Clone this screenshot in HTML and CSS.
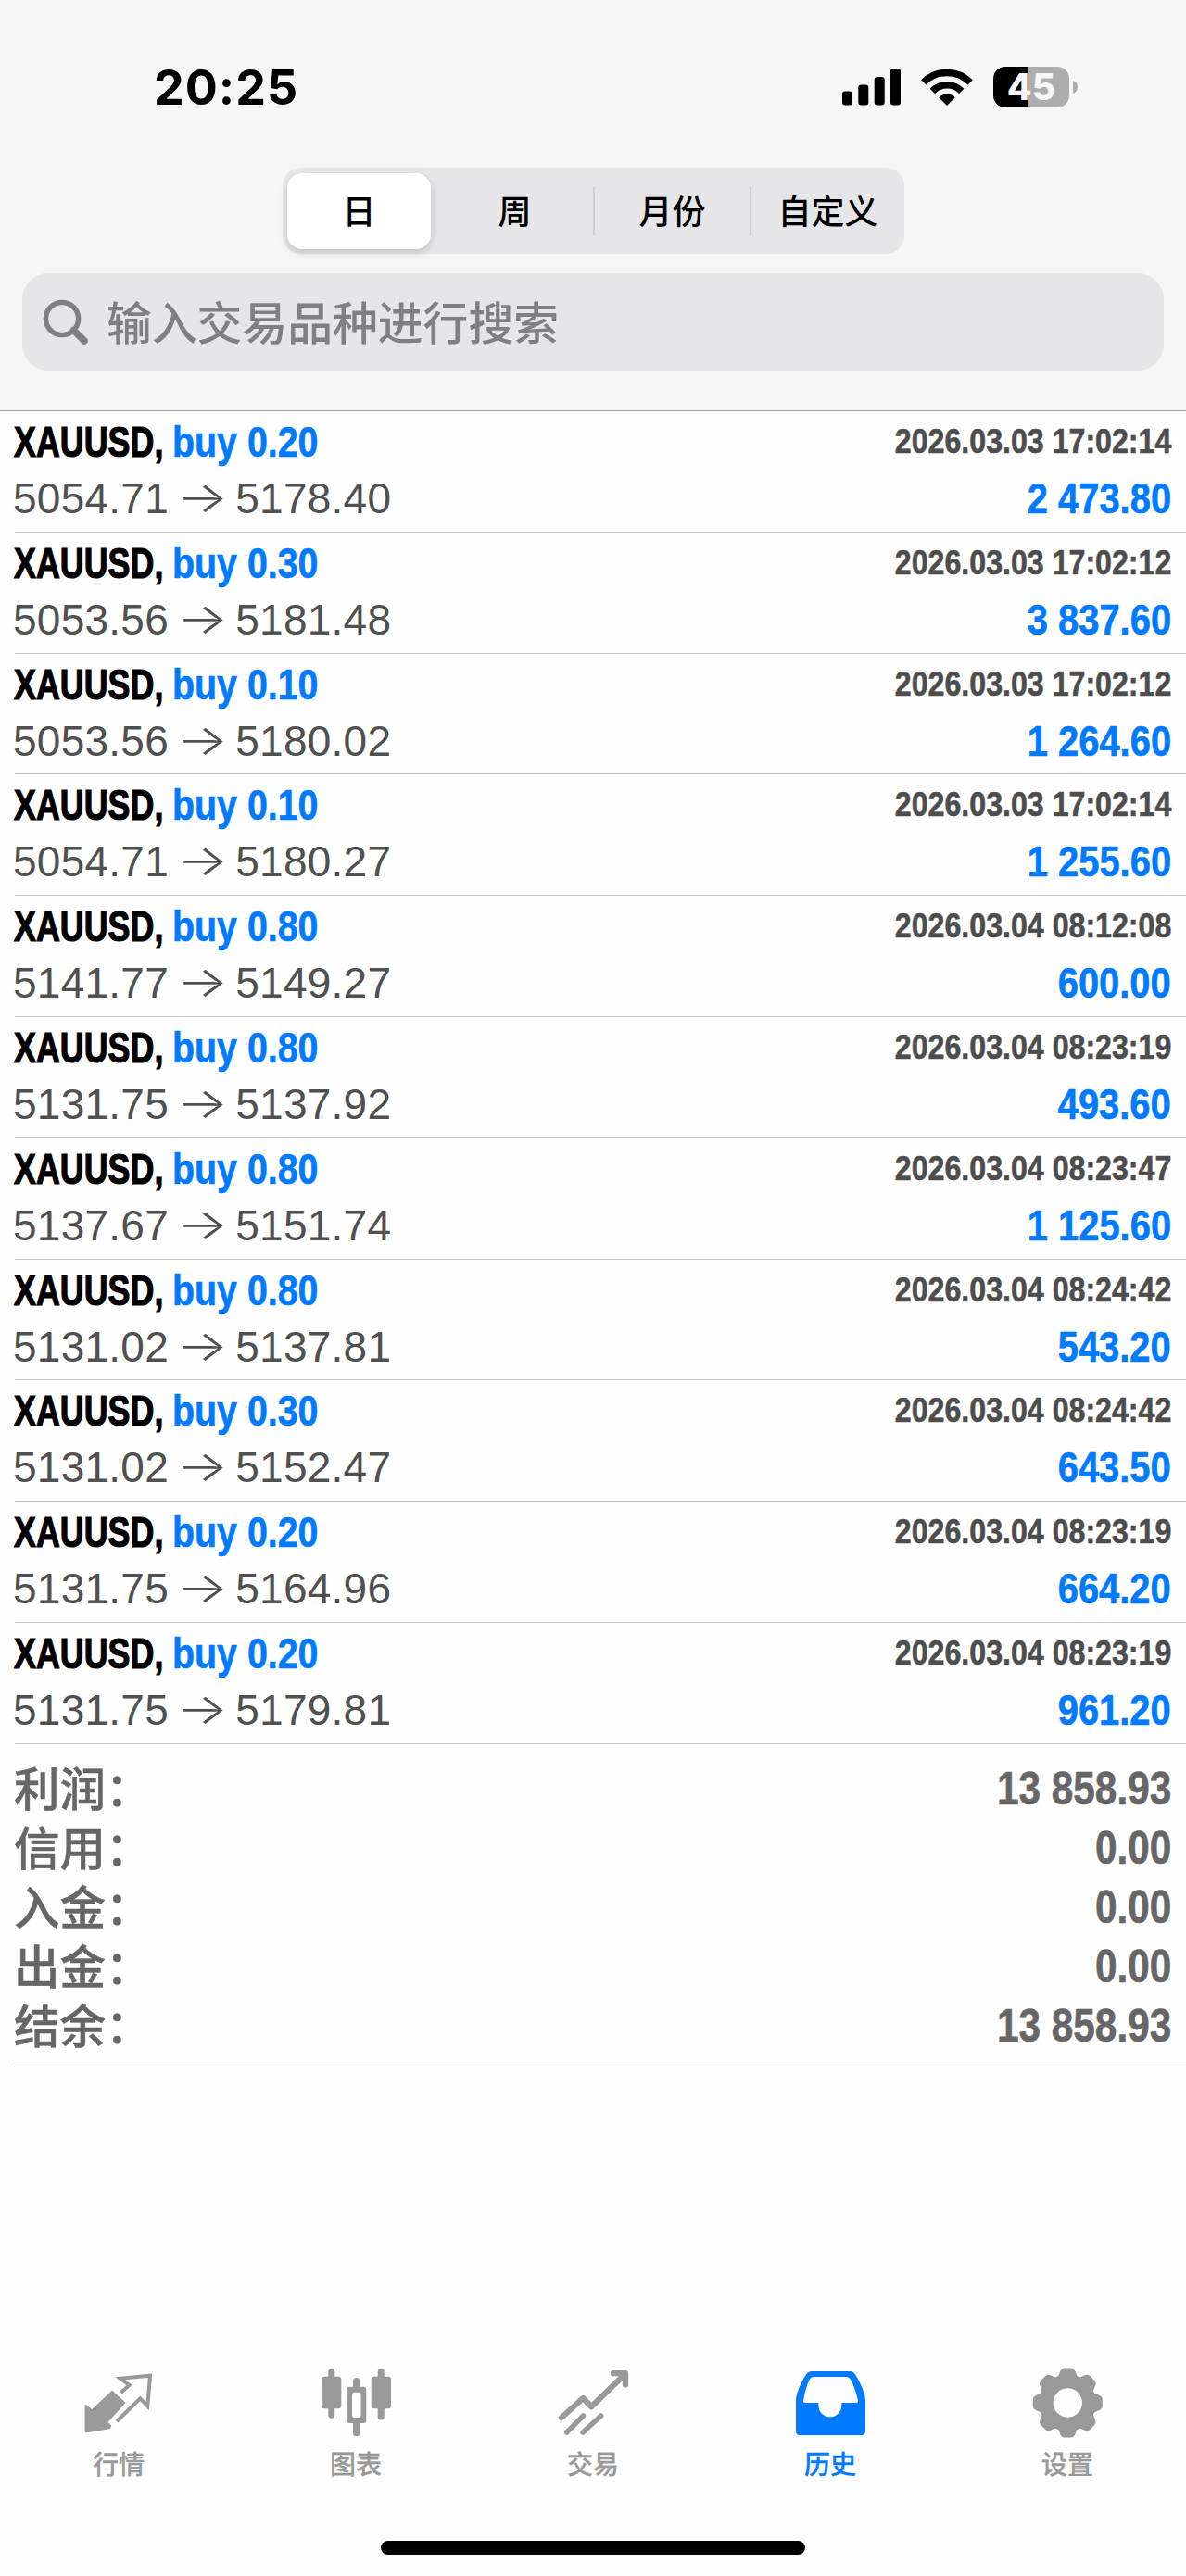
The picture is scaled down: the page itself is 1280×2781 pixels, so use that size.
FILE: index.html
```html
<!DOCTYPE html>
<html lang="zh-CN">
<head>
<meta charset="utf-8">
<title>历史</title>
<link rel="stylesheet" href="styles.css">
</head>
<body>
<div class="app">
  <header class="header">
    <div class="status">
      <span class="clock">20:25</span>
      <div class="indicators">
        <svg class="signal" width="64" height="40" viewBox="0 0 64 40"><rect x="0" y="24.5" width="11" height="15" rx="3"/><rect x="17.3" y="17.5" width="11" height="22" rx="3"/><rect x="34.7" y="9" width="11" height="30.5" rx="3"/><rect x="52" y="0" width="11" height="39.5" rx="3"/></svg>
        <svg class="wifi" width="58" height="42" viewBox="0 0 58 42"><path class="arc" d="M3.8 15.8A35.7 35.7 0 0 1 54.2 15.8"/><path class="arc" d="M13.3 25.3A22.2 22.2 0 0 1 44.7 25.3"/><path d="M29 41L20.2 32.2A12.5 12.5 0 0 1 37.8 32.2Z"/></svg>
        <div class="battery"><span>45</span></div>
        <svg class="nub" width="5" height="14" viewBox="0 0 5 14"><path d="M0 0Q5 2 5 7Q5 12 0 14Z"/></svg>
      </div>
    </div>
    <nav class="segments">
      <span class="segment selected">日</span>
      <span class="segment week">周</span>
      <span class="segment ruled">月份</span>
      <span class="segment ruled">自定义</span>
    </nav>
    <div class="search">
      <svg width="52" height="52" viewBox="0 0 52 52"><circle cx="22" cy="22" r="17.6"/><path d="M34.5 34.5L46 46" class="handle"/></svg>
      <span>输入交易品种进行搜索</span>
    </div>
  </header>

  <main>
    <ul class="deals">
      <li><div class="line"><span class="title"><b>XAUUSD,</b><i>buy 0.20</i></span><time>2026.03.03 17:02:14</time></div><div class="line"><span class="price">5054.71 <em>→</em> 5178.40</span><span class="profit">2 473.80</span></div></li>
      <li><div class="line"><span class="title"><b>XAUUSD,</b><i>buy 0.30</i></span><time>2026.03.03 17:02:12</time></div><div class="line"><span class="price">5053.56 <em>→</em> 5181.48</span><span class="profit">3 837.60</span></div></li>
      <li><div class="line"><span class="title"><b>XAUUSD,</b><i>buy 0.10</i></span><time>2026.03.03 17:02:12</time></div><div class="line"><span class="price">5053.56 <em>→</em> 5180.02</span><span class="profit">1 264.60</span></div></li>
      <li><div class="line"><span class="title"><b>XAUUSD,</b><i>buy 0.10</i></span><time>2026.03.03 17:02:14</time></div><div class="line"><span class="price">5054.71 <em>→</em> 5180.27</span><span class="profit">1 255.60</span></div></li>
      <li><div class="line"><span class="title"><b>XAUUSD,</b><i>buy 0.80</i></span><time>2026.03.04 08:12:08</time></div><div class="line"><span class="price">5141.77 <em>→</em> 5149.27</span><span class="profit">600.00</span></div></li>
      <li><div class="line"><span class="title"><b>XAUUSD,</b><i>buy 0.80</i></span><time>2026.03.04 08:23:19</time></div><div class="line"><span class="price">5131.75 <em>→</em> 5137.92</span><span class="profit">493.60</span></div></li>
      <li><div class="line"><span class="title"><b>XAUUSD,</b><i>buy 0.80</i></span><time>2026.03.04 08:23:47</time></div><div class="line"><span class="price">5137.67 <em>→</em> 5151.74</span><span class="profit">1 125.60</span></div></li>
      <li><div class="line"><span class="title"><b>XAUUSD,</b><i>buy 0.80</i></span><time>2026.03.04 08:24:42</time></div><div class="line"><span class="price">5131.02 <em>→</em> 5137.81</span><span class="profit">543.20</span></div></li>
      <li><div class="line"><span class="title"><b>XAUUSD,</b><i>buy 0.30</i></span><time>2026.03.04 08:24:42</time></div><div class="line"><span class="price">5131.02 <em>→</em> 5152.47</span><span class="profit">643.50</span></div></li>
      <li><div class="line"><span class="title"><b>XAUUSD,</b><i>buy 0.20</i></span><time>2026.03.04 08:23:19</time></div><div class="line"><span class="price">5131.75 <em>→</em> 5164.96</span><span class="profit">664.20</span></div></li>
      <li><div class="line"><span class="title"><b>XAUUSD,</b><i>buy 0.20</i></span><time>2026.03.04 08:23:19</time></div><div class="line"><span class="price">5131.75 <em>→</em> 5179.81</span><span class="profit">961.20</span></div></li>
    </ul>
    <dl class="summary">
      <div><dt>利润：</dt><dd>13 858.93</dd></div>
      <div><dt>信用：</dt><dd>0.00</dd></div>
      <div><dt>入金：</dt><dd>0.00</dd></div>
      <div><dt>出金：</dt><dd>0.00</dd></div>
      <div><dt>结余：</dt><dd>13 858.93</dd></div>
    </dl>
  </main>

  <footer class="footer">
    <nav class="tabs">
      <a class="tab">
        <svg viewBox="0 0 80 80"><path d="M33 28.500L46.500 41L27.500 62L31.500 66L30 68.500L5.500 72.500Q4.300 72.500 4.300 71V43.500L11.300 49Z" class="round"/><path class="line1" d="M42.500 30L51.500 22L41.700 14.700L74 11.700L71.300 44.700L63.300 36.300L38 61"/></svg>
        <span>行情</span>
      </a>
      <a class="tab">
        <svg viewBox="0 0 80 80"><rect x="10.300" y="4" width="7" height="53.700" rx="3.500"/><rect x="3" y="12.700" width="21.300" height="34.600" rx="3"/><rect x="37" y="14" width="7.300" height="63.300" rx="3.600"/><rect x="30.300" y="23.700" width="21" height="39.300" rx="3"/><rect class="hole" x="36" y="29.700" width="9.500" height="27.300" rx="3"/><rect x="63.700" y="4" width="7" height="55.500" rx="3.500"/><rect x="56.700" y="12.700" width="21.300" height="34.600" rx="3"/></svg>
        <span>图表</span>
      </a>
      <a class="tab">
        <svg viewBox="0 0 80 80"><path class="line2" d="M6 57L29.300 36L38.300 45.300L74.300 10.300M62 9.200H75V21.500"/><path class="line3" d="M11.700 73L29.500 55M29 73L48.700 55"/></svg>
        <span>交易</span>
      </a>
      <a class="tab active">
        <svg viewBox="0 0 80 80"><path fill-rule="evenodd" d="M20.500 7H61.500Q65 7 67 10.500C73 20 78 31 78 39V71.500Q78 76 73.500 76H7.500Q3 76 3 71.500V39C3 31 8 20 14 10.500Q16 7 20.500 7ZM22 13Q19 13 17.800 15.500Q13 26 11 38.500Q10.700 41 13 41H27.300V43.800A12.500 12.500 0 0 0 52.300 43.800V41H68Q70.300 41 70 38.500Q67 25 61.800 15.500Q60.500 13 57.500 13Z"/></svg>
        <span>历史</span>
      </a>
      <a class="tab">
        <svg viewBox="0 0 80 80"><g transform="translate(40.300 41)"><circle r="30.500"/><g id="pair"><path id="tooth" d="M-12 -27Q-9.500 -29 -8.500 -33Q-7 -37.500 -3.500 -37.500H3.500Q7 -37.500 8.500 -33Q9.500 -29 12 -27Z"/><use href="#tooth" transform="rotate(45)"/></g><use href="#pair" transform="rotate(90)"/><use href="#pair" transform="rotate(180)"/><use href="#pair" transform="rotate(270)"/><circle class="hole" r="15.700"/></g></svg>
        <span>设置</span>
      </a>
    </nav>
    <div class="home"></div>
  </footer>
</div>
</body>
</html>
```
FILE: styles.css
```css
* { box-sizing: border-box; margin: 0; padding: 0; }
body { background: #fefefe; }
.app {
  width: 1280px;
  height: 2781px;
  display: flex;
  flex-direction: column;
  font-family: "Liberation Sans", "Noto Sans CJK SC", sans-serif;
  overflow: hidden;
}

.header {
  height: 444px;
  flex: none;
  background: #f6f6f6;
  border-bottom: 1px solid #9c9c9c;
  display: flex;
  flex-direction: column;
}
.status {
  height: 181px;
  padding: 65px 117px 0 166px;
  display: flex;
  align-items: flex-start;
  justify-content: space-between;
}
.clock {
  font: 700 52px/60px Inter, sans-serif;
  letter-spacing: 1px;
}
.indicators { display: flex; align-items: center; height: 57px; }
.wifi { margin-left: 20px; }
.arc { fill: none; stroke: #000; stroke-width: 7.5; }
.battery {
  width: 82px;
  height: 44px;
  margin-left: 21px;
  border-radius: 13px;
  background: linear-gradient(90deg, #000 37px, #adadad 37px);
  color: #f6f6f6;
  font: 800 39px/44px Inter, sans-serif;
  text-align: center;
}
.nub { margin-left: 4px; fill: #adadad; }

.segments {
  width: 671px;
  height: 93px;
  margin-left: 305px;
  padding: 6px 0 5px 5px;
  border-radius: 20px;
  background: #e6e6e8;
  display: grid;
  grid-template-columns: 155px 175px 169px 167px;
}
.segment {
  display: flex;
  align-items: center;
  justify-content: center;
  padding-bottom: 4px;
  font: 500 36px/50px "Noto Sans CJK SC", sans-serif;
}
.segment.week { padding-left: 6px; }
.segment.ruled {
  padding-left: 2px;
  background: linear-gradient(#cfcfd2, #cfcfd2) 0 center / 2px 52px no-repeat;
}
.selected {
  background: #fff;
  border-radius: 16px;
  box-shadow: 0 4px 10px rgba(0, 0, 0, .14);
}
.search {
  height: 105px;
  margin: 21px 24px 0;
  padding-left: 21px;
  border-radius: 28px;
  background: #e6e6e8;
  display: flex;
  align-items: center;
  color: #808084;
  font: 500 48.800px/72px "Noto Sans CJK SC", sans-serif;
}
.search svg { fill: none; stroke: #808084; stroke-width: 5.500; }
.search .handle { stroke-width: 7.500; stroke-linecap: round; }
.search span { margin: 0 0 4px 18px; }

.deals { list-style: none; padding-left: 16px; }
.deals li {
  height: 130.800px;
  padding: 3px 16px 0 0;
  border-bottom: 1px solid #c6c6c8;
}
.line { display: flex; justify-content: space-between; height: 61px; }
.title, time, .profit, dd {
  font-weight: 700;
  white-space: pre;
  -webkit-text-stroke: .6px currentColor;
}
.title {
  display: flex;
  margin-left: -1px;
  font-size: 45.500px;
  line-height: 61px;
}
.title b {
  width: 170.500px;
  transform: scaleX(.788);
  transform-origin: left;
  -webkit-text-stroke-width: 1.200px;
}
.title i {
  font-style: normal;
  color: #007aff;
  transform: scaleX(.865);
  transform-origin: left;
}
time {
  font-size: 37.300px;
  line-height: 59px;
  color: #4d4d4d;
  transform: scaleX(.862);
  transform-origin: right;
}
.price {
  margin-left: -2px;
  font-size: 46px;
  line-height: 61px;
  letter-spacing: .25px;
  color: #505050;
}
.price em {
  display: inline-block;
  margin: 0 1px;
  font: 300 46px/1 Inter, sans-serif;
  transform: translateY(-1px) scaleX(1.3);
}
.profit {
  font-size: 46px;
  line-height: 61px;
  color: #007aff;
  transform: scaleX(.867);
  transform-origin: right;
}

.summary {
  margin-left: 15px;
  padding: 16px 16px 12px 1px;
  border-bottom: 1px solid #c6c6c8;
  color: #666;
}
.summary div { display: flex; justify-content: space-between; height: 64px; }
dt {
  margin-left: -1px;
  font: 500 49.500px/59px "Noto Sans CJK SC", sans-serif;
  -webkit-text-stroke: .5px #666;
}
dd {
  font-size: 49.500px;
  line-height: 64px;
  transform: scaleX(.855);
  transform-origin: right;
}

.footer {
  margin-top: auto;
  height: 228px;
  flex: none;
  display: flex;
  flex-direction: column;
  align-items: center;
}
.tabs { display: grid; grid-template-columns: repeat(5, 256px); height: 190px; }
.tab {
  display: flex;
  flex-direction: column;
  align-items: center;
  color: #999;
  font: 500 28px/40px "Noto Sans CJK SC", sans-serif;
}
.tab svg { width: 80px; height: 80px; fill: currentColor; }
.tab span { margin-top: 6px; -webkit-text-stroke: .3px currentColor; }
.tab.active { color: #007aff; }
.tab .hole { fill: #fefefe; }
.round { stroke: currentColor; stroke-width: 1.500; stroke-linejoin: round; }
.line1, .line2, .line3 { fill: none; stroke: currentColor; stroke-linecap: round; }
.line1 { stroke-width: 4; stroke-linecap: butt; }
.line2 { stroke-width: 6.300; stroke-linejoin: round; }
.line3 { stroke-width: 5.500; }
.home { width: 458px; height: 15px; border-radius: 8px; background: #000; }
```
